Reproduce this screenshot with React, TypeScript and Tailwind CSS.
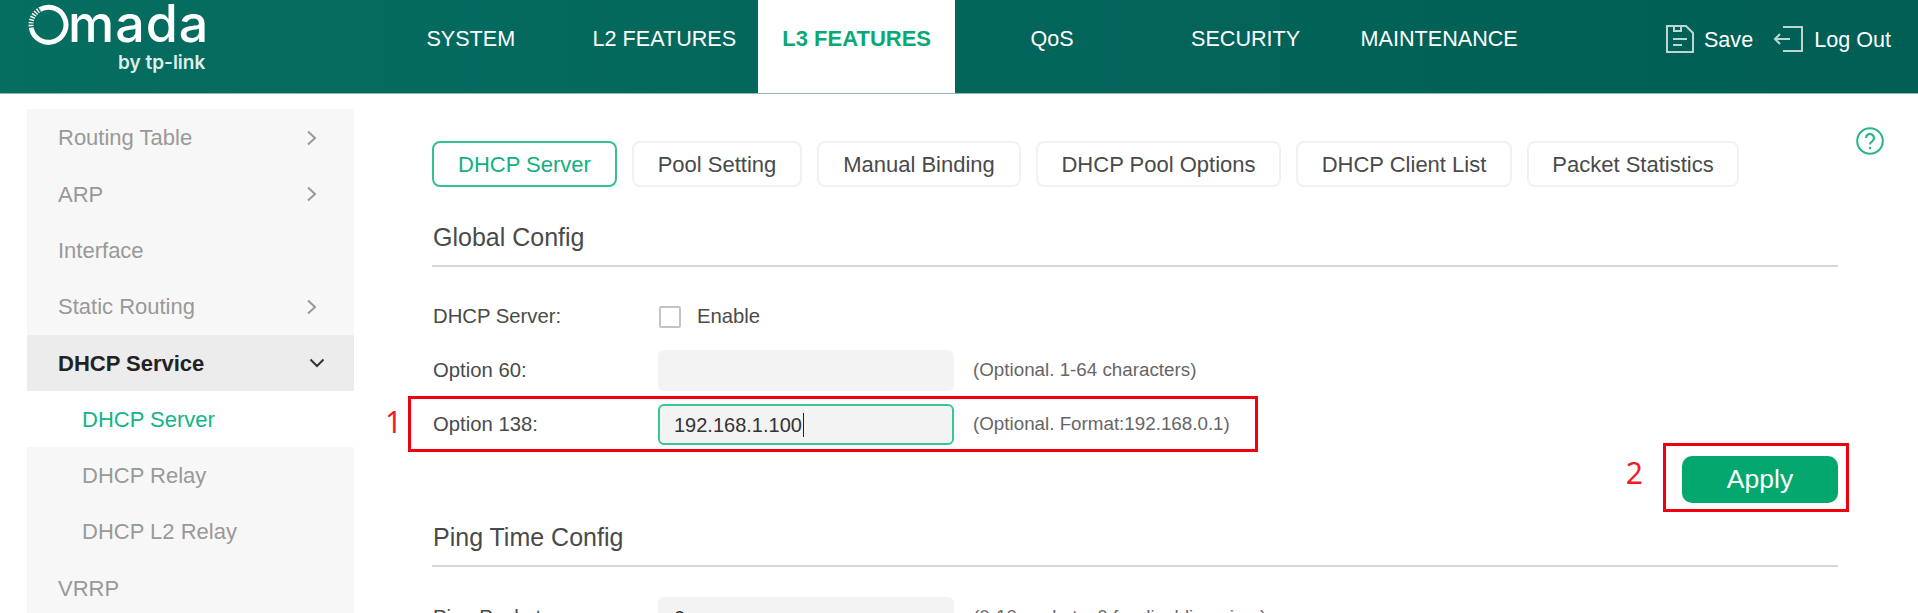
const NAV = ['SYSTEM', 'L2 FEATURES', 'L3 FEATURES', 'QoS', 'SECURITY', 'MAINTENANCE']
const TABS = [
  { label: 'DHCP Server', width: 'w-[185px]' },
  { label: 'Pool Setting', width: 'w-[170px]' },
  { label: 'Manual Binding', width: 'w-[204px]' },
  { label: 'DHCP Pool Options', width: 'w-[245px]' },
  { label: 'DHCP Client List', width: 'w-[216px]' },
  { label: 'Packet Statistics', width: 'w-[212px]' },
]

function Chevron({ open }: { open?: boolean }) {
  return (
    <svg width="18" height="18" viewBox="0 0 18 18" fill="none" stroke={open ? '#333333' : '#999999'} strokeWidth="2" className={open ? '-mr-[5px]' : ''}>
      {open ? <path d="M2.5 5.5 9 12 15.5 5.5" /> : <path d="M5 2.5 12 9 5 15.5" />}
    </svg>
  )
}

function SideItem({ label, arrow, sub, active, open }: { label: string; arrow?: boolean; sub?: boolean; active?: boolean; open?: boolean }) {
  let color = 'text-[#999999]'
  if (open) color = 'text-[#222222] font-bold bg-[#ececec]'
  if (active) color = 'text-[#12b488] bg-white'
  return (
    <div className={`h-[56.4px] flex items-center justify-between pr-[33px] text-[22px] ${sub ? 'pl-[55px]' : 'pl-[31px] pt-[1px]'} ${color}`}>
      <span>{label}</span>
      {arrow && <Chevron />}
      {open && <Chevron open />}
    </div>
  )
}

function SectionTitle({ title }: { title: string }) {
  return <div className="h-[44px] pl-[1px] border-b-2 border-[#d6d6d6] text-[25px] leading-[28px] text-[#4a4a4a]">{title}</div>
}

function Field({ label, children }: { label: string; children: React.ReactNode }) {
  return (
    <div className="relative h-[41px] flex items-center text-[20.3px] text-[#4a4a4a]">
      <span className="w-[226px] pl-[1px] shrink-0">{label}</span>
      {children}
    </div>
  )
}

function TextBox({ value, focus, caret }: { value?: string; focus?: boolean; caret?: boolean }) {
  return (
    <div className={`w-[296px] h-[41px] shrink-0 rounded-[6px] bg-[#f3f3f3] pl-[14px] flex items-center text-[20px] text-[#333333] border-2 ${focus ? 'border-[#35c896]' : 'border-[#f3f3f3]'}`}>
      {value}
      {caret && <span className="w-[1.5px] h-[24px] bg-[#222222] ml-[1px]" />}
    </div>
  )
}

function Hint({ text }: { text: string }) {
  return <span className="ml-[19px] text-[18.8px] text-[#666666] whitespace-nowrap">{text}</span>
}

export default function App() {
  return (
    <div className="w-[1918px] h-[613px] overflow-hidden bg-white font-['Liberation_Sans',Arial,sans-serif]">
      {/* top bar */}
      <header className="h-[94px] border-b border-[#8fb8b2] bg-gradient-to-r from-[#066d61] to-[#005e55] flex text-white">
        <div className="w-[374px] shrink-0 pl-[27px] pt-[1px]">
          <div className="flex items-start h-[46px]">
            <svg width="42" height="42" viewBox="0 0 42 42" fill="none" className="shrink-0 mt-[3px]">
              <path d="M13 5.5A17.5 17.5 0 1 1 4.5 25" stroke="#ffffff" strokeWidth="5" />
              <path d="M4.5 25A17.5 17.5 0 0 1 13 5.5" stroke="#ffffff" strokeWidth="5" strokeDasharray="1.4 1.4" />
            </svg>
            <span className="font-['Inter',sans-serif] text-[52px] leading-[46px] font-medium tracking-[1px] -ml-[1px]">mada</span>
          </div>
          <div className="pl-[91px] mt-[5px] font-['Inter',sans-serif] text-[19px] leading-[22px] font-semibold text-[#dfeeea]">by tp-link</div>
        </div>
        <nav className="flex">
          {NAV.map(item => (
            <div
              key={item}
              className={`h-[93px] flex items-start justify-center pt-[26px] leading-[26px] ${item === 'L3 FEATURES' ? 'w-[197px] -ml-[3px] bg-white text-[#0aa874] font-bold text-[22px]' : 'w-[193.6px] text-[21.6px]'}`}
            >
              {item}
            </div>
          ))}
        </nav>
        <div className="ml-auto flex items-start pt-[25px] pr-[27px] text-[21.6px]">
          <svg width="28" height="28" viewBox="0 0 28 28" fill="none" stroke="#bcd6d1" strokeWidth="2">
            <path d="M1 1H20L27 8V27H1Z" />
            <path d="M8 1V6H15V1M7 14H21M7 20H16" />
          </svg>
          <span className="ml-[10px] mt-[1px] leading-[28px]">Save</span>
          <svg width="31" height="28" viewBox="0 0 31 28" fill="none" stroke="#bcd6d1" strokeWidth="2" className="ml-[20px]">
            <path d="M10 2H29V26H10M2 14H17M7 9 2 14 7 19" />
          </svg>
          <span className="ml-[10px] mt-[1px] leading-[28px]">Log Out</span>
        </div>
      </header>

      <main className="flex">
        {/* side menu */}
        <aside className="w-[327px] h-[504px] ml-[27px] mt-[15px] shrink-0 bg-[#f7f7f7] overflow-hidden">
          <SideItem label="Routing Table" arrow />
          <SideItem label="ARP" arrow />
          <SideItem label="Interface" />
          <SideItem label="Static Routing" arrow />
          <SideItem label="DHCP Service" open />
          <SideItem label="DHCP Server" sub active />
          <SideItem label="DHCP Relay" sub />
          <SideItem label="DHCP L2 Relay" sub />
          <SideItem label="VRRP" />
        </aside>

        <section className="w-[1406px] ml-[78px] shrink-0">
          <div className="flex gap-[15px] mt-[47px]">
            {TABS.map((tab, i) => (
              <div
                key={tab.label}
                className={`${tab.width} h-[46px] shrink-0 rounded-[8px] flex items-center justify-center text-[22px] border-2 ${i === 0 ? 'border-[#35c090] text-[#12b07e]' : 'border-[#f1f1f1] text-[#4a4a4a]'}`}
              >
                {tab.label}
              </div>
            ))}
          </div>

          <div className="mt-[36px]">
            <SectionTitle title="Global Config" />
          </div>

          <div className="mt-[29px] flex flex-col gap-[13px]">
            <Field label="DHCP Server:">
              <span className="w-[22px] h-[22px] ml-[1px] border-2 border-[#c4c4c4] rounded-[2px]" />
              <span className="ml-[16px]">Enable</span>
            </Field>
            <Field label="Option 60:">
              <TextBox />
              <Hint text="(Optional. 1-64 characters)" />
            </Field>
            <Field label="Option 138:">
              <TextBox value="192.168.1.100" focus caret />
              <Hint text="(Optional. Format:192.168.0.1)" />
              {/* red callout */}
              <div className="absolute -left-[24px] -top-[8px] w-[850px] h-[56px] border-[3px] border-[#f0000f]" />
              <span className="absolute -left-[47px] top-0 text-[#f01c2c] text-[30px] leading-[36px] font-['Noto_Sans',sans-serif]">1</span>
            </Field>
          </div>

          <div className="relative mt-[11px] flex justify-end">
            <button className="w-[156px] h-[47px] rounded-[10px] bg-[#04a76e] text-white text-[26.5px]">Apply</button>
            <div className="absolute right-[-11px] -top-[13px] w-[186px] h-[69px] border-[3px] border-[#f0000f]" />
            <span className="absolute right-[195px] -top-[1px] text-[#f01c2c] text-[30px] leading-[36px] font-['Noto_Sans',sans-serif]">2</span>
          </div>

          <div className="mt-[20px]">
            <SectionTitle title="Ping Time Config" />
          </div>

          <div className="mt-[30px]">
            <Field label="Ping Packets:">
              <TextBox value="0" />
              <Hint text="(0-10 packets, 0 for disabling ping.)" />
            </Field>
          </div>
        </section>

        <div className="ml-[18px] mt-[33px]">
          <svg width="28" height="28" viewBox="0 0 28 28" fill="none" stroke="#2ab588" strokeWidth="2">
            <circle cx="14" cy="14" r="12.8" />
            <path d="M10 11a4 4 0 1 1 6.2 3.3c-1.4.9-2.2 1.6-2.2 3.2" strokeWidth="2.2" />
            <circle cx="14" cy="21" r="1.3" fill="#2ab588" stroke="none" />
          </svg>
        </div>
      </main>
    </div>
  )
}
